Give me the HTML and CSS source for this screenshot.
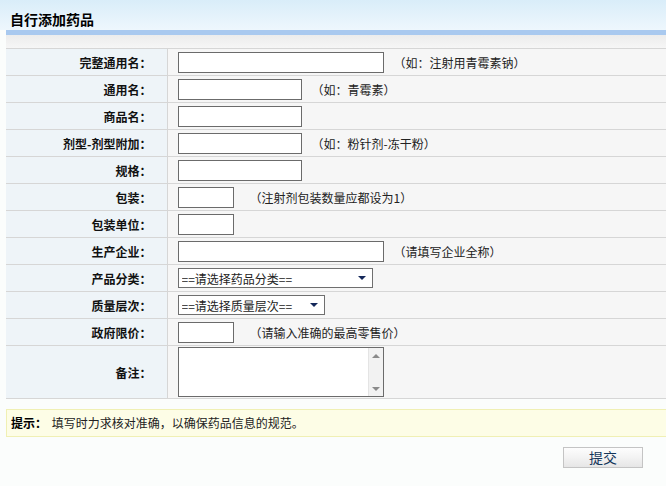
FILE: index.html
```html
<!DOCTYPE html>
<html>
<head>
    <meta charset="UTF-8">
    <title>自行添加药品</title>
    <link rel="stylesheet" href="styles.css">
</head>
<body>

    <div class="titulo">
        <h1>自行添加药品</h1>
    </div>
    <div class="faixa"></div>

    <table class="ficha">
        <tr>
            <th>完整通用名：</th>
            <td><input type="text" class="largo"><span class="dica">（如：注射用青霉素钠）</span></td>
        </tr>
        <tr>
            <th>通用名：</th>
            <td><input type="text" class="medio"><span class="dica">（如：青霉素）</span></td>
        </tr>
        <tr>
            <th>商品名：</th>
            <td><input type="text" class="medio"></td>
        </tr>
        <tr>
            <th>剂型-剂型附加：</th>
            <td><input type="text" class="medio"><span class="dica">（如：粉针剂-冻干粉）</span></td>
        </tr>
        <tr>
            <th>规格：</th>
            <td><input type="text" class="medio"></td>
        </tr>
        <tr>
            <th>包装：</th>
            <td><input type="text" class="curto"><span class="dica longe">（注射剂包装数量应都设为1）</span></td>
        </tr>
        <tr>
            <th>包装单位：</th>
            <td><input type="text" class="curto"></td>
        </tr>
        <tr>
            <th>生产企业：</th>
            <td><input type="text" class="largo"><span class="dica">（请填写企业全称）</span></td>
        </tr>
        <tr>
            <th>产品分类：</th>
            <td><span class="seletor s-largo"><select><option>==请选择药品分类==</option></select></span></td>
        </tr>
        <tr>
            <th>质量层次：</th>
            <td><span class="seletor s-curto"><select><option>==请选择质量层次==</option></select></span></td>
        </tr>
        <tr>
            <th>政府限价：</th>
            <td><input type="text" class="curto"><span class="dica longe">（请输入准确的最高零售价）</span></td>
        </tr>
        <tr class="alto">
            <th>备注：</th>
            <td>
                <div class="area">
                    <textarea></textarea>
                    <div class="rolagem"><span class="sobe"></span><span class="desce"></span></div>
                </div>
            </td>
        </tr>
    </table>

    <div class="aviso"><b>提示：</b> 填写时力求核对准确，以确保药品信息的规范。</div>

    <div class="acoes">
        <button type="button">提交</button>
    </div>

</body>
</html>
```

FILE: styles.css
```css
* {
    box-sizing: border-box;
    margin: 0;
    padding: 0;
}

body {
    background: #fbfdfc;
    color: #222;
    font-family: "Noto Sans CJK SC", "Noto Sans", sans-serif;
    font-size: 12px;
    width: 666px;
    overflow: hidden;
}

/* cabecalho */
.titulo {
    height: 30px;
    padding: 10px 0 0 10px;
    background: linear-gradient(#d9edf9, #eef7fd);
}
    .titulo h1 {
        font-size: 14px;
        line-height: 18px;
        font-weight: bold;
        color: #000;
    }

.faixa {
    margin-left: 6px;
    height: 18px;
    border-top: 5px solid #a9c9ef;
    background: linear-gradient(#ececec, #f6f6f6);
}

/* tabela */
.ficha {
    margin-left: 6px;
    width: 660px;
    border-collapse: collapse;
    border-top: 1px solid #d6d6d6;
}
    .ficha th,
    .ficha td {
        height: 27px;
        border-bottom: 1px solid #d6d6d6;
        vertical-align: middle;
    }
    .ficha th {
        width: 161px;
        padding-right: 15px;
        text-align: right;
        font-weight: bold;
        color: #111;
        background: #eef4f8;
        border-right: 1px solid #d6d6d6;
    }
    .ficha td {
        padding-left: 10px;
        background: #f6f6f6;
        white-space: nowrap;
    }
    .ficha .alto th,
    .ficha .alto td {
        height: 53px;
    }

.ficha input {
    height: 21px;
    border: 1px solid #6b6b6b;
    background: #fff;
    vertical-align: middle;
}
    .ficha input.largo { width: 206px; }
    .ficha input.medio { width: 124px; }
    .ficha input.curto { width: 56px; }

.dica {
    margin-left: 10px;
    vertical-align: middle;
    color: #222;
}
    .dica.longe { margin-left: 16px; }

/* select */
.seletor {
    display: inline-block;
    position: relative;
    vertical-align: middle;
    height: 20px;
    border: 1px solid #6f6f6f;
    background: #fff;
}
    .seletor select {
        appearance: none;
        -webkit-appearance: none;
        border: 0;
        outline: 0;
        background: transparent;
        height: 18px;
        width: 100%;
        padding-left: 3px;
        font-family: inherit;
        font-size: 12px;
        color: #222;
    }
    .seletor:after {
        content: '';
        position: absolute;
        right: 6px;
        top: 7px;
        border-left: 4px solid transparent;
        border-right: 4px solid transparent;
        border-top: 4px solid #14285a;
    }
    .s-largo { width: 195px; }
    .s-curto { width: 147px; }

/* textarea */
.area {
    display: flex;
    width: 206px;
    height: 50px;
    border: 1px solid #6b6b6b;
    background: #fff;
}
    .area textarea {
        flex: 1;
        border: 0;
        outline: 0;
        resize: none;
        overflow: hidden;
    }
    .rolagem {
        width: 15px;
        display: flex;
        flex-direction: column;
        justify-content: space-between;
        align-items: center;
        padding: 6px 0 5px;
        background: #f2f2f2;
        border-left: 1px solid #e4e4e4;
    }
        .rolagem span {
            width: 0;
            height: 0;
            border-left: 4px solid transparent;
            border-right: 4px solid transparent;
        }
        .rolagem .sobe { border-bottom: 4px solid #8a8a8a; }
        .rolagem .desce { border-top: 4px solid #8a8a8a; }

/* aviso */
.aviso {
    margin: 10px 0 0 6px;
    height: 28px;
    line-height: 26px;
    padding-left: 4px;
    border: 1px solid #f0f0b4;
    border-right: 0;
    background: #fdfde6;
    color: #222;
}
    .aviso b {
        color: #000;
        margin-right: 2px;
    }

.acoes {
    padding: 10px 23px 0 0;
    text-align: right;
}
    .acoes button {
        width: 80px;
        height: 21px;
        border: 1px solid #c4c4c4;
        background: linear-gradient(#fdfdfd, #f4f4f4 45%, #e6e6e6);
        font-family: inherit;
        font-size: 14px;
        line-height: 17px;
        color: #14365a;
    }
```
